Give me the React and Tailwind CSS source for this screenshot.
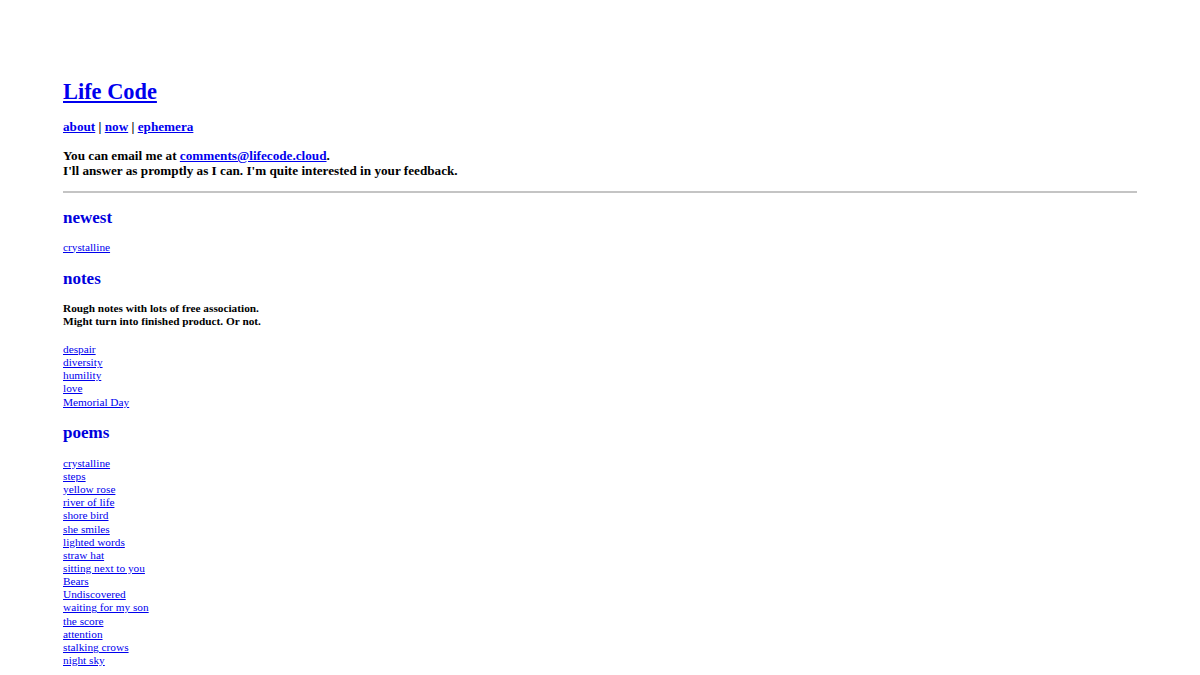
export default function App() {
  const notes = ["despair", "diversity", "humility", "love", "Memorial Day"];
  const poems = [
    "crystalline", "steps", "yellow rose", "river of life", "shore bird", "she smiles",
    "lighted words", "straw hat", "sitting next to you", "Bears", "Undiscovered",
    "waiting for my son", "the score", "attention", "stalking crows", "night sky",
  ];
  const link = "text-[#0000ee] underline";
  return (
    <div className="min-h-[675px] bg-white px-[63px] pt-[79px] text-black" style={{ fontFamily: '"Liberation Serif", "Times New Roman", serif' }}>
      <h1 className="text-[22.4px] font-bold leading-[26px]">
        <a href="#" className={link}>Life Code</a>
      </h1>
      <p className="mt-[14px] text-[13.2px] font-bold leading-[15.5px]">
        <a href="#" className={link}>about</a> | <a href="#" className={link}>now</a> | <a href="#" className={link}>ephemera</a>
      </p>
      <p className="mt-[13px] text-[13.2px] font-bold leading-[15.5px]">
        You can email me at <a href="#" className={link}>comments@lifecode.cloud</a>.<br />
        I'll answer as promptly as I can. I'm quite interested in your feedback.
      </p>
      <hr className="mt-[12px] border-t-2 border-[#c4c4c4]" />
      <h2 className="mt-[15px] text-[17px] font-bold leading-[20px] text-[#0000dd]">newest</h2>
      <div className="mt-[13px] text-[11.3px] leading-[13.15px]">
        <a href="#" className={link}>crystalline</a>
      </div>
      <h2 className="mt-[15px] text-[17px] font-bold leading-[20px] text-[#0000dd]">notes</h2>
      <p className="mt-[13px] text-[11.3px] font-bold leading-[13.15px]">
        Rough notes with lots of free association.<br />Might turn into finished product. Or not.
      </p>
      <div className="mt-[15px] flex flex-col items-start text-[11.3px] leading-[13.15px]">
        {notes.map((n) => (
          <a key={n} href="#" className={link}>{n}</a>
        ))}
      </div>
      <h2 className="mt-[14px] text-[17px] font-bold leading-[20px] text-[#0000dd]">poems</h2>
      <div className="mt-[14px] flex flex-col items-start text-[11.3px] leading-[13.15px]">
        {poems.map((n) => (
          <a key={n} href="#" className={link}>{n}</a>
        ))}
      </div>
    </div>
  );
}
